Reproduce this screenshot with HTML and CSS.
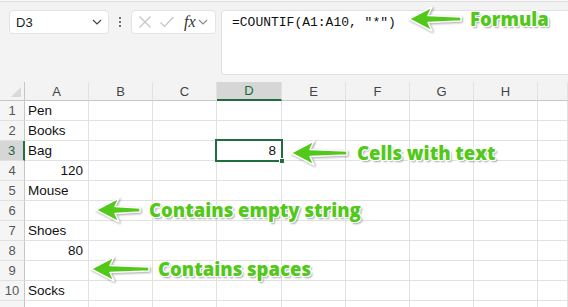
FILE: index.html
```html
<!DOCTYPE html>
<html>
<head>
<meta charset="utf-8">
<link rel="stylesheet" href="styles.css">
</head>
<body>
<div class="page">
  <div class="toolbar">
    <div class="namebox"><span>D3</span>
      <svg class="chev" width="10" height="6" viewBox="0 0 10 6"><path d="M1 1 L5 5 L9 1" fill="none" stroke="#444" stroke-width="1.2"/></svg>
    </div>
    <div class="dots"><i></i><i></i><i></i></div>
    <div class="fxbox">
      <svg width="14" height="14" viewBox="0 0 14 14"><path d="M1.5 1.5 L12.5 12.5 M12.5 1.5 L1.5 12.5" stroke="#c4c4c4" stroke-width="1.2" fill="none"/></svg>
      <svg width="16" height="14" viewBox="0 0 16 14"><path d="M1.5 7.5 L5.5 11.5 L14.5 2" stroke="#c4c4c4" stroke-width="1.2" fill="none"/></svg>
      <span class="fx">fx</span>
      <svg class="chev2" width="10" height="6" viewBox="0 0 10 6"><path d="M1 1 L5 5 L9 1" fill="none" stroke="#888" stroke-width="1.1"/></svg>
    </div>
    <div class="formula">=COUNTIF(A1:A10, "*")</div>
  </div>

  <div class="sheet">
    <div class="hd corner"><span class="tri"></span></div>
    <div class="hd">A</div><div class="hd">B</div><div class="hd">C</div><div class="hd sel">D</div><div class="hd">E</div><div class="hd">F</div><div class="hd">G</div><div class="hd">H</div><div class="hd"></div>

    <div class="rh">1</div><div class="c">Pen</div><div class="c"></div><div class="c"></div><div class="c"></div><div class="c"></div><div class="c"></div><div class="c"></div><div class="c"></div><div class="c"></div>
    <div class="rh">2</div><div class="c">Books</div><div class="c"></div><div class="c"></div><div class="c"></div><div class="c"></div><div class="c"></div><div class="c"></div><div class="c"></div><div class="c"></div>
    <div class="rh rsel">3</div><div class="c">Bag</div><div class="c"></div><div class="c"></div><div class="c num active">8<span class="handle"></span></div><div class="c"></div><div class="c"></div><div class="c"></div><div class="c"></div><div class="c"></div>
    <div class="rh">4</div><div class="c num">120</div><div class="c"></div><div class="c"></div><div class="c"></div><div class="c"></div><div class="c"></div><div class="c"></div><div class="c"></div><div class="c"></div>
    <div class="rh">5</div><div class="c">Mouse</div><div class="c"></div><div class="c"></div><div class="c"></div><div class="c"></div><div class="c"></div><div class="c"></div><div class="c"></div><div class="c"></div>
    <div class="rh">6</div><div class="c"></div><div class="c"></div><div class="c"></div><div class="c"></div><div class="c"></div><div class="c"></div><div class="c"></div><div class="c"></div><div class="c"></div>
    <div class="rh">7</div><div class="c">Shoes</div><div class="c"></div><div class="c"></div><div class="c"></div><div class="c"></div><div class="c"></div><div class="c"></div><div class="c"></div><div class="c"></div>
    <div class="rh">8</div><div class="c num">80</div><div class="c"></div><div class="c"></div><div class="c"></div><div class="c"></div><div class="c"></div><div class="c"></div><div class="c"></div><div class="c"></div>
    <div class="rh">9</div><div class="c"></div><div class="c"></div><div class="c"></div><div class="c"></div><div class="c"></div><div class="c"></div><div class="c"></div><div class="c"></div><div class="c"></div>
    <div class="rh">10</div><div class="c">Socks</div><div class="c"></div><div class="c"></div><div class="c"></div><div class="c"></div><div class="c"></div><div class="c"></div><div class="c"></div><div class="c"></div>
    <div class="rh"></div><div class="c"></div><div class="c"></div><div class="c"></div><div class="c"></div><div class="c"></div><div class="c"></div><div class="c"></div><div class="c"></div><div class="c"></div>
  </div>

  <div class="note n-formula">
    <svg class="arrow" width="54" height="26" viewBox="0 0 54 26"><path d="M1 13 L24 1 L20 9.5 L53 11 L53 15 L20 16.5 L24 25 Z"/></svg>
    <span class="label">Formula</span>
  </div>
  <div class="note n-cells">
    <svg class="arrow" width="58" height="26" viewBox="0 0 58 26"><path d="M1 13 L24 1 L20 9.5 L57 11 L57 15 L20 16.5 L24 25 Z"/></svg>
    <span class="label">Cells with text</span>
  </div>
  <div class="note n-empty">
    <svg class="arrow" width="46" height="26" viewBox="0 0 46 26"><path d="M1 13 L24 1 L20 9.5 L45 11 L45 15 L20 16.5 L24 25 Z"/></svg>
    <span class="label">Contains empty string</span>
  </div>
  <div class="note n-spaces">
    <svg class="arrow" width="60" height="26" viewBox="0 0 60 26"><path d="M1 13 L24 1 L20 9.5 L59 11 L59 15 L20 16.5 L24 25 Z"/></svg>
    <span class="label">Contains spaces</span>
  </div>
</div>
</body>
</html>
```

FILE: styles.css
```css
* { box-sizing: border-box; }
html, body { margin: 0; padding: 0; }
body {
  width: 568px;
  height: 307px;
  overflow: hidden;
  background: #fff;
  font-family: "Liberation Sans", Arial, sans-serif;
}
.page { position: relative; width: 568px; height: 307px; overflow: hidden; }

.toolbar {
  height: 82px;
  background: #f3f3f3;
  border-top: 1px solid #fafafa;
  box-shadow: inset 0 1px 0 #dedede;
  display: flex;
  align-items: flex-start;
  padding: 9px 0 0 9px;
}
.namebox {
  width: 100px;
  height: 24px;
  background: #fff;
  border: 1px solid #e3e3e3;
  border-radius: 4px;
  display: flex;
  align-items: center;
  justify-content: space-between;
  padding: 0 6px 0 6px;
  font-size: 13px;
  color: #222;
}
.dots {
  width: 22px;
  height: 24px;
  display: flex;
  flex-direction: column;
  align-items: center;
  justify-content: center;
  gap: 2px;
}
.dots i { display: block; width: 2px; height: 2px; background: #444; border-radius: 1px; }
.fxbox {
  width: 85px;
  height: 24px;
  background: #fff;
  border: 1px solid #e3e3e3;
  border-radius: 4px;
  display: flex;
  align-items: center;
  padding: 0 5px 0 6px;
  gap: 7px;
}
.fx {
  font-family: "Liberation Serif", "Times New Roman", serif;
  font-style: italic;
  font-size: 16px;
  color: #333;
  margin-left: 2px;
  line-height: 1;
}
.chev2 { margin-left: -5px; }
.formula {
  flex: 1;
  margin-left: 5px;
  height: 65px;
  background: #fff;
  border: 1px solid #e0e0e0;
  border-right: none;
  border-radius: 4px 0 0 4px;
  padding: 3px 0 0 10px;
  font-family: "Liberation Mono", "Courier New", monospace;
  font-size: 13px;
  line-height: 18px;
  color: #111;
}

.sheet {
  display: grid;
  grid-template-columns: 25px 64px 64px 64px 65px 64px 64px 64px 64px 1fr;
  grid-template-rows: 19px repeat(11, 20px);
  font-size: 13.5px;
}
.hd {
  background: #f3f3f3;
  border-right: 1px solid #e1e1e1;
  border-bottom: 1px solid #c6c6c6;
  color: #444;
  font-size: 13px;
  display: flex;
  align-items: center;
  justify-content: center;
}
.hd.corner { position: relative; border-right: 1px solid #c6c6c6; }
.tri {
  position: absolute;
  right: 3px;
  bottom: 3px;
  width: 0; height: 0;
  border-left: 10px solid transparent;
  border-bottom: 10px solid #dadada;
}
.hd.sel {
  background: #d6d6d6;
  color: #1b6b3a;
  border-bottom: 2px solid #1e6e40;
}
.rh {
  background: #f5f5f5;
  border-right: 1px solid #c6c6c6;
  border-bottom: 1px solid #e1e1e1;
  color: #555;
  font-size: 13px;
  display: flex;
  align-items: center;
  justify-content: center;
}
.rh.rsel { background: #d6d6d6; color: #1b6b3a; border-right: 2px solid #1e6e40; }
.c {
  border-right: 1px solid #e1e1e1;
  border-bottom: 1px solid #e1e1e1;
  padding: 0 3px;
  display: flex;
  align-items: center;
  color: #111;
  white-space: nowrap;
}
.c.num { justify-content: flex-end; padding-right: 5px; }
.c.active {
  position: relative;
  outline: 2px solid #1e6e40;
  outline-offset: -1px;
  margin-top: -1px;
  margin-left: -1px;
}
.handle {
  position: absolute;
  right: -4px;
  bottom: -4px;
  width: 6px;
  height: 6px;
  background: #1e6e40;
  border: 1px solid #fff;
}

.note {
  position: absolute;
  display: flex;
  align-items: center;
}
.arrow { overflow: visible; filter: drop-shadow(1px 1px 1px rgba(0,0,0,0.35)); }
.arrow path { fill: #52c91a; stroke: #fff; stroke-width: 1.5; stroke-linejoin: round; }
.label {
  font-family: "Open Sans", "Noto Sans", sans-serif;
  font-weight: 800;
  font-size: 18.5px;
  line-height: 1;
  color: #52c91a;
  text-shadow:
    1px 0 0 #fff, -1px 0 0 #fff, 0 1px 0 #fff, 0 -1px 0 #fff,
    1px 1px 0 #fff, -1px -1px 0 #fff, 1px -1px 0 #fff, -1px 1px 0 #fff,
    2px 2px 2px rgba(0,0,0,0.35);
}
.n-formula { left: 408px; top: 6px; }
.n-formula .label { margin-left: 8px; }
.n-cells { left: 290px; top: 140px; }
.n-cells .label { margin-left: 9px; }
.n-empty { left: 95px; top: 197px; }
.n-empty .label { margin-left: 8px; }
.n-spaces { left: 90px; top: 256px; }
.n-spaces .label { margin-left: 8px; }
```
